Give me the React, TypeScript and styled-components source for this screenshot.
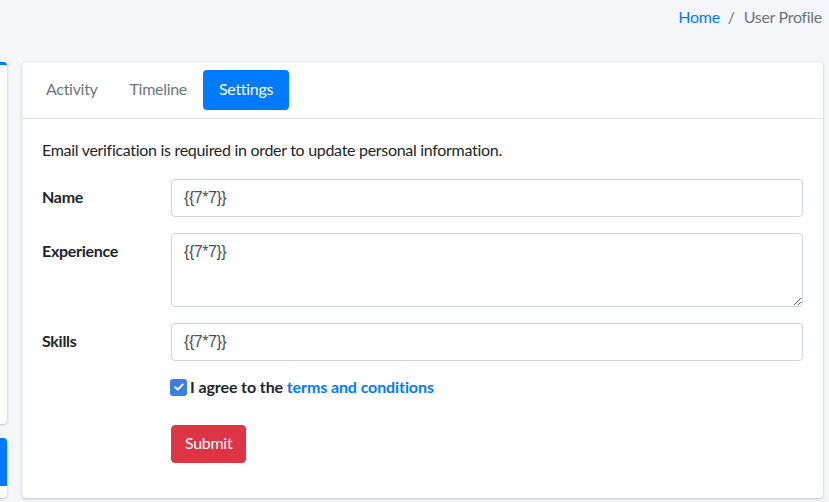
import React from "react";
import styled, { createGlobalStyle } from "styled-components";

const Global = createGlobalStyle`
  html, body { margin: 0; padding: 0; overflow: hidden; }
  body {
    background: #f4f6f9;
    font-family: Lato, "Noto Sans", sans-serif;
    font-size: 16px;
    line-height: 24px;
    letter-spacing: -0.3px;
    color: #212529;
  }
  * { box-sizing: border-box; }
`;

const Page = styled.div`
  display: flex;
  flex-direction: column;
  width: 829px;
  height: 502px;
`;

const Header = styled.div`
  display: flex;
  justify-content: flex-end;
  height: 62px;
  padding: 5px 7px 0 0;
`;

const Crumbs = styled.ol`
  display: flex;
  list-style: none;
  margin: 0;
  padding: 0;
`;

const Crumb = styled.li<{ $active?: boolean }>`
  color: ${(p) => (p.$active ? "#6c757d" : "#007bff")};
  &:not(:first-child)::before {
    content: "/";
    color: #6c757d;
    padding: 0 9px 0 8px;
  }
`;

const Row = styled.div`
  display: flex;
  gap: 15px;
  margin-left: -53px;
  padding-right: 6px;
  align-items: flex-start;
`;

const Side = styled.div`
  flex: 0 0 60px;
  display: flex;
  flex-direction: column;
  gap: 14px;
`;

const SideCard = styled.div<{ $h: number }>`
  height: ${(p) => p.$h}px;
  background: #fff;
  border-top: 3px solid #007bff;
  border-radius: 4px;
  box-shadow: 0 0 1px rgba(0, 0, 0, 0.125), 0 1px 3px rgba(0, 0, 0, 0.2);
`;

const SideCardBlue = styled.div`
  height: 60px;
  background: #fff;
  border-radius: 4px;
  overflow: hidden;
  box-shadow: 0 0 1px rgba(0, 0, 0, 0.125), 0 1px 3px rgba(0, 0, 0, 0.2);
`;

const SideHead = styled.div`
  height: 48px;
  background: #007bff;
`;

const Main = styled.div`
  flex: 1;
`;

const Card = styled.div`
  background: #fff;
  border-radius: 4px;
  box-shadow: 0 0 1px rgba(0, 0, 0, 0.125), 0 1px 3px rgba(0, 0, 0, 0.2);
`;

const CardHeader = styled.div`
  padding: 8px;
  border-bottom: 1px solid rgba(0, 0, 0, 0.125);
`;

const Pills = styled.ul`
  display: flex;
  list-style: none;
  margin: 0;
  padding: 0;
`;

const Pill = styled.li<{ $active?: boolean }>`
  padding: 7px 16px 9px;
  border-radius: 4px;
  color: ${(p) => (p.$active ? "#fff" : "#6c757d")};
  background: ${(p) => (p.$active ? "#007bff" : "transparent")};
`;

const CardBody = styled.div`
  padding: 20px;
`;

const Lead = styled.p`
  margin: -1px 0 17px;
`;

const Group = styled.div<{ $mb?: number }>`
  display: grid;
  grid-template-columns: 129px 1fr;
  margin-bottom: ${(p) => p.$mb ?? 16}px;
`;

const Label = styled.label`
  font-weight: 700;
  padding-top: 6px;
  line-height: 24px;
`;

const controlCss = `
  display: block;
  width: 100%;
  padding: 6px 12px;
  font-family: "Liberation Sans", Arial, sans-serif;
  font-size: 16px;
  letter-spacing: -0.45px;
  line-height: 24px;
  color: #495057;
  background: #fff;
  border: 1px solid #ced4da;
  border-radius: 4px;
  outline: none;
`;

const Input = styled.input`
  ${controlCss}
  height: 38px;
`;

const TextArea = styled.textarea`
  ${controlCss}
  height: 74px;
  resize: vertical;
`;

const Offset = styled.div`
  grid-column: 2;
  display: flex;
  align-items: flex-start;
`;

const CheckLabel = styled.label`
  display: flex;
  align-items: center;
  gap: 3px;
  height: 24px;
  font-weight: 700;
  letter-spacing: -0.1px;
  margin-bottom: 8px;
  margin-top: -2px;
`;

const Box = styled.span`
  width: 17px;
  height: 17px;
  margin-left: -1px;
  border-radius: 3px;
  background: #3b7fe0;
  display: inline-flex;
  align-items: center;
  justify-content: center;
`;

const Link = styled.a`
  color: #007bff;
  text-decoration: none;
`;

const Submit = styled.button`
  font-family: inherit;
  font-size: 16px;
  letter-spacing: -0.3px;
  line-height: 24px;
  padding: 5px 13px 7px;
  height: 38px;
  color: #fff;
  background: #dc3545;
  border: 1px solid #dc3545;
  border-radius: 4px;
  margin-top: 2px;
`;

export default function App() {
  return (
    <>
      <Global />
      <Page>
        <Header>
          <Crumbs>
            <Crumb>Home</Crumb>
            <Crumb $active>User Profile</Crumb>
          </Crumbs>
        </Header>
        <Row>
          <Side>
            <SideCard $h={362} />
            <SideCardBlue>
              <SideHead />
            </SideCardBlue>
          </Side>
          <Main>
            <Card>
              <CardHeader>
                <Pills>
                  <Pill>Activity</Pill>
                  <Pill>Timeline</Pill>
                  <Pill $active>Settings</Pill>
                </Pills>
              </CardHeader>
              <CardBody>
                <Lead>Email verification is required in order to update personal information.</Lead>
                <Group>
                  <Label>Name</Label>
                  <Input defaultValue="{{7*7}}" />
                </Group>
                <Group>
                  <Label>Experience</Label>
                  <TextArea defaultValue="{{7*7}}" />
                </Group>
                <Group>
                  <Label>Skills</Label>
                  <Input defaultValue="{{7*7}}" />
                </Group>
                <Group>
                  <Offset>
                    <CheckLabel>
                      <Box>
                        <svg width="12" height="12" viewBox="0 0 12 12">
                          <path d="M2.2 6.2 L4.8 8.6 L9.8 3.4" fill="none" stroke="#fff" strokeWidth="2" strokeLinecap="round" strokeLinejoin="round" />
                        </svg>
                      </Box>
                      <span>
                        I agree to the <Link href="#">terms and conditions</Link>
                      </span>
                    </CheckLabel>
                  </Offset>
                </Group>
                <Group $mb={15}>
                  <Offset>
                    <Submit type="submit">Submit</Submit>
                  </Offset>
                </Group>
              </CardBody>
            </Card>
          </Main>
        </Row>
      </Page>
    </>
  );
}
